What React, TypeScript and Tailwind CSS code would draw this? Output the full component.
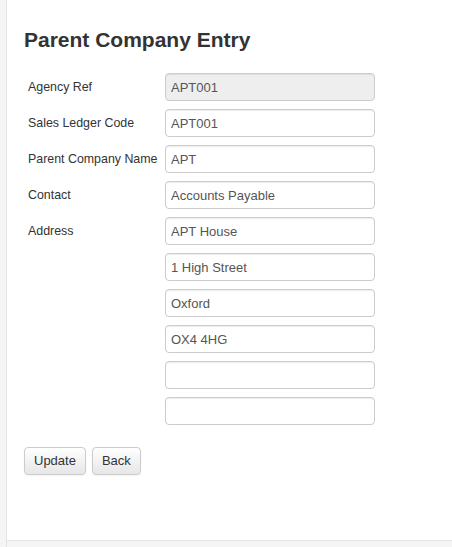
import React from "react";

const rows: { label: string; value: string; disabled?: boolean }[] = [
  { label: "Agency Ref", value: "APT001", disabled: true },
  { label: "Sales Ledger Code", value: "APT001" },
  { label: "Parent Company Name", value: "APT" },
  { label: "Contact", value: "Accounts Payable" },
  { label: "Address", value: "APT House" },
  { label: "", value: "1 High Street" },
  { label: "", value: "Oxford" },
  { label: "", value: "OX4 4HG" },
  { label: "", value: "" },
  { label: "", value: "" },
];

export default function App() {
  return (
    <div className="w-[452px] h-[547px] bg-[#f5f5f5] flex font-['Liberation_Sans',Arial,sans-serif] text-[#333]">
      <div className="w-[7px] border-r border-[#e3e3e3]" />
      <div className="flex-1 flex flex-col">
        <div className="h-[541px] bg-white border-b border-[#e3e3e3] pl-[17px] pt-[27px]">
          <h1 className="text-[21px] font-bold leading-[25px] text-[#333]">Parent Company Entry</h1>

          <div className="mt-[21px] flex flex-col gap-[8px]">
            {rows.map((r, i) => (
              <div key={i} className="flex items-center h-[28px]">
                <label className="w-[141px] pl-[4px] text-[12.4px] text-[#333]">{r.label}</label>
                <input
                  readOnly
                  disabled={r.disabled}
                  value={r.value}
                  className={`w-[210px] h-[28px] px-[5px] text-[13px] text-[#555] border border-[#ccc] rounded-[4px] shadow-[inset_0_1px_1px_rgba(0,0,0,0.075)] outline-none ${
                    r.disabled ? "bg-[#eee]" : "bg-white"
                  }`}
                />
              </div>
            ))}
          </div>

          <div className="mt-[22px] flex gap-[6px]">
            <button className="h-[28px] px-[9px] text-[13px] text-[#333] border border-[#ccc] rounded-[4px] bg-gradient-to-b from-white to-[#e6e6e6] shadow-[0_1px_2px_rgba(0,0,0,0.05)]">
              Update
            </button>
            <button className="h-[28px] px-[9px] text-[13px] text-[#333] border border-[#ccc] rounded-[4px] bg-gradient-to-b from-white to-[#e6e6e6] shadow-[0_1px_2px_rgba(0,0,0,0.05)]">
              Back
            </button>
          </div>
        </div>
      </div>
    </div>
  );
}
